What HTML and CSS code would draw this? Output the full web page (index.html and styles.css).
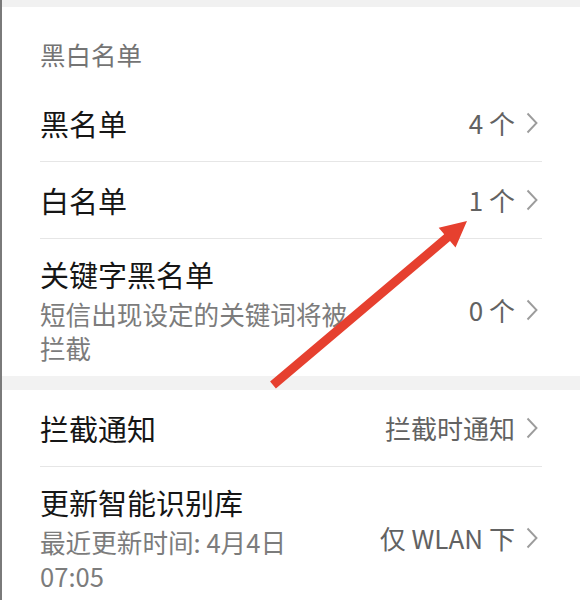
FILE: index.html
```html
<!DOCTYPE html>
<html lang="zh-CN">
<head>
<meta charset="utf-8">
<link rel="stylesheet" href="styles.css">
</head>
<body>
<div class="page">
  <div class="topband"></div>
  <section class="group">
    <div class="group-title">黑白名单</div>
    <div class="row">
      <div class="text"><div class="title">黑名单</div></div>
      <div class="value">4 个<svg class="chev" viewBox="0 0 12 22"><polyline points="1.5,1.5 10.5,11 1.5,20.5"/></svg></div>
    </div>
    <div class="row">
      <div class="text"><div class="title">白名单</div></div>
      <div class="value">1 个<svg class="chev" viewBox="0 0 12 22"><polyline points="1.5,1.5 10.5,11 1.5,20.5"/></svg></div>
    </div>
    <div class="row tall last">
      <div class="text"><div class="title">关键字黑名单</div><div class="sub">短信出现设定的关键词将被拦截</div></div>
      <div class="value">0 个<svg class="chev" viewBox="0 0 12 22"><polyline points="1.5,1.5 10.5,11 1.5,20.5"/></svg></div>
    </div>
  </section>
  <div class="gap"></div>
  <section class="group">
    <div class="row">
      <div class="text"><div class="title">拦截通知</div></div>
      <div class="value">拦截时通知<svg class="chev" viewBox="0 0 12 22"><polyline points="1.5,1.5 10.5,11 1.5,20.5"/></svg></div>
    </div>
    <div class="row tall last">
      <div class="text"><div class="title">更新智能识别库</div><div class="sub">最近更新时间: 4月4日 07:05</div></div>
      <div class="value">仅 WLAN 下<svg class="chev" viewBox="0 0 12 22"><polyline points="1.5,1.5 10.5,11 1.5,20.5"/></svg></div>
    </div>
  </section>
  <svg class="arrow" viewBox="0 0 580 600"><polygon points="270.1,381.6 444.2,234.3 438.7,227.8 467,221 455.5,247.6 450,241.1 275.9,388.4"/></svg>
</div>
</body>
</html>
```
FILE: styles.css
```css
html, body {
  margin: 0;
  padding: 0;
  background: #ffffff;
}
body {
  font-family: "Noto Sans CJK SC", "Noto Sans", sans-serif;
  width: 580px;
  height: 600px;
  overflow: hidden;
}
.page {
  position: relative;
  width: 578px;
  height: 600px;
  border-left: 2px solid #7a7a7a;
  overflow: hidden;
}
.topband {
  height: 7px;
  background: #f1f1f1;
}
.gap {
  height: 14px;
  background: #f2f2f2;
}
.group-title {
  padding: 32px 0 16px 38px;
  font-size: 25.5px;
  line-height: 30px;
  color: #747474;
}
.row {
  display: flex;
  align-items: center;
  justify-content: space-between;
  margin: 0 38px 0 38px;
  min-height: 77px;
  border-bottom: 1px solid #e6e6e6;
  box-sizing: border-box;
}
.row.last {
  border-bottom: none;
}
.row.tall {
  padding: 15px 0 11px 0;
  min-height: 137px;
}
.text {
  max-width: 312px;
}
.title {
  font-size: 29px;
  line-height: 40px;
  color: #161616;
}
.sub {
  margin-top: 3px;
  font-size: 25.6px;
  line-height: 34px;
  color: #7c7c7c;
}
.value {
  display: flex;
  align-items: center;
  font-size: 26px;
  line-height: 34px;
  color: #626262;
  white-space: nowrap;
}
.chev {
  width: 12px;
  height: 22px;
  margin-left: 11px;
  margin-right: 4px;
}
.chev polyline {
  fill: none;
  stroke: #9c9c9c;
  stroke-width: 1.9;
}
.arrow {
  position: absolute;
  left: -2px;
  top: 0;
  width: 580px;
  height: 600px;
  pointer-events: none;
}
.arrow polygon {
  fill: #e6402f;
}
```
